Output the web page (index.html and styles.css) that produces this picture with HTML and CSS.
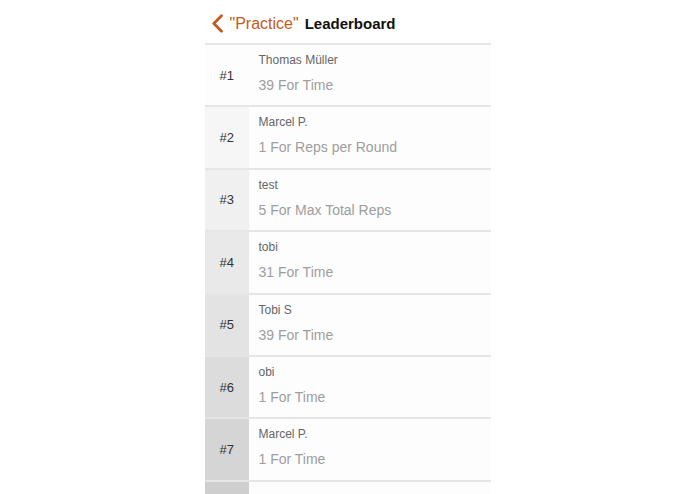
FILE: index.html
```html
<!DOCTYPE html>
<html lang="en">
<head>
  <meta charset="UTF-8">
  <meta name="viewport" content="width=device-width, initial-scale=1.0">
  <title>Leaderboard</title>
  <link rel="stylesheet" href="styles.css">
</head>
<body>
  <div class="screen">
    <div class="nav">
      <a class="back" href="#">
        <svg width="13" height="19" viewBox="0 0 13 19"><path d="M10.5 1.8 L2.8 9.5 L10.5 17.2" fill="none" stroke="#c55a1e" stroke-width="2.8" stroke-linecap="round" stroke-linejoin="round"/></svg>
        <span>"Practice"</span>
      </a>
      <span class="title">Leaderboard</span>
    </div>

    <div class="list">
      <div class="row">
        <div class="rank">#1</div>
        <div class="info">
          <div class="name">Thomas Müller</div>
          <div class="score">39 For Time</div>
        </div>
      </div>
      <div class="row">
        <div class="rank">#2</div>
        <div class="info">
          <div class="name">Marcel P.</div>
          <div class="score">1 For Reps per Round</div>
        </div>
      </div>
      <div class="row">
        <div class="rank">#3</div>
        <div class="info">
          <div class="name">test</div>
          <div class="score">5 For Max Total Reps</div>
        </div>
      </div>
      <div class="row">
        <div class="rank">#4</div>
        <div class="info">
          <div class="name">tobi</div>
          <div class="score">31 For Time</div>
        </div>
      </div>
      <div class="row">
        <div class="rank">#5</div>
        <div class="info">
          <div class="name">Tobi S</div>
          <div class="score">39 For Time</div>
        </div>
      </div>
      <div class="row">
        <div class="rank">#6</div>
        <div class="info">
          <div class="name">obi</div>
          <div class="score">1 For Time</div>
        </div>
      </div>
      <div class="row">
        <div class="rank">#7</div>
        <div class="info">
          <div class="name">Marcel P.</div>
          <div class="score">1 For Time</div>
        </div>
      </div>
      <div class="row">
        <div class="rank"></div>
        <div class="info"></div>
      </div>
    </div>
  </div>
</body>
</html>
```

FILE: styles.css
```css
html, body {
  margin: 0;
  padding: 0;
  background: #fff;
  overflow: hidden;
}
body {
  font-family: "Liberation Sans", Arial, sans-serif;
}
.screen {
  width: 286px;
  margin: 0 auto;
}
.nav {
  height: 39px;
  padding-top: 4px;
  display: flex;
  align-items: center;
  padding-left: 6px;
  border-bottom: 2px solid #e6e6e6;
}
.back {
  display: flex;
  align-items: center;
  color: #c55a1e;
  text-decoration: none;
  font-size: 16px;
  margin-right: 6px;
}
.back svg {
  margin-right: 6px;
}
.title {
  font-size: 15px;
  font-weight: bold;
  color: #111;
}
.row {
  display: flex;
  height: 60.4px;
  border-bottom: 2px solid #e6e6e6;
  background: #fdfdfd;
}
.rank {
  width: 44px;
  display: flex;
  align-items: center;
  padding-left: 15px;
  box-sizing: border-box;
  font-size: 13px;
  color: #333;
}
.info {
  padding: 7px 10px;
}
.name {
  font-size: 12px;
  line-height: 16px;
  color: #666;
}
.score {
  margin-top: 7px;
  font-size: 14px;
  line-height: 20px;
  color: #9e9e9e;
}
.row:nth-child(1) .rank { background: #fdfdfd; }
.row:nth-child(2) .rank { background: #f6f6f6; }
.row:nth-child(3) .rank { background: #f0f0f0; }
.row:nth-child(4) .rank { background: #e9e9e9; }
.row:nth-child(5) .rank { background: #e3e3e3; }
.row:nth-child(6) .rank { background: #dcdcdc; }
.row:nth-child(7) .rank { background: #d5d5d5; }
.row:nth-child(8) .rank { background: #cecece; }
```
